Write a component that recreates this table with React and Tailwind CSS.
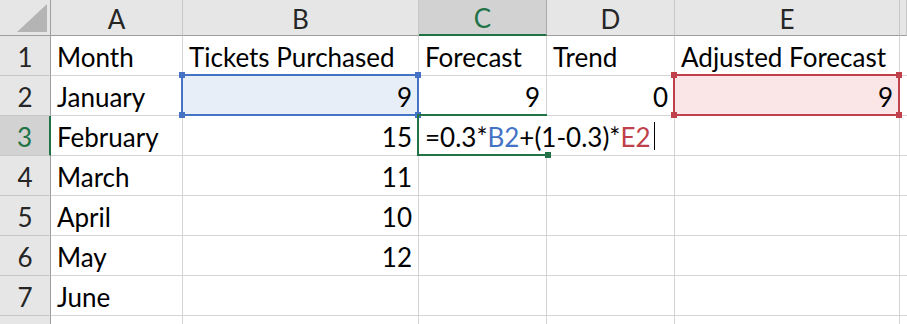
import React from 'react';

const cols = ['A', 'B', 'C', 'D', 'E', ''];

const rows = [
  ['Month', 'Tickets Purchased', 'Forecast', 'Trend', 'Adjusted Forecast'],
  ['January', '9', '9', '0', '9'],
  ['February', '15', '', '', ''],
  ['March', '11', '', '', ''],
  ['April', '10', '', '', ''],
  ['May', '12', '', '', ''],
  ['June', '', '', '', ''],
  ['', '', '', '', ''],
];

const Handle = ({ className, color }) => (
  <span className={`absolute w-[6px] h-[6px] ${color} ${className}`} />
);

const Selection = ({ border, fill, handle }) => (
  <div className={`absolute -left-[2px] -top-[2px] -right-[1px] -bottom-[1px] border-2 ${border} ${fill} z-10 pointer-events-none`}>
    <Handle color={handle} className="-left-[4px] -top-[4px]" />
    <Handle color={handle} className="-right-[4px] -top-[4px]" />
    <Handle color={handle} className="-left-[4px] -bottom-[4px]" />
    <Handle color={handle} className="-right-[4px] -bottom-[4px]" />
  </div>
);

const App = () => {
  return (
    <div
      className="w-[907px] h-[324px] overflow-hidden bg-white text-[26px] text-black leading-none"
      style={{ fontFamily: 'Lato, "Open Sans", sans-serif' }}
    >
      <div className="grid grid-cols-[51px_132px_236px_128px_128px_225px_1fr] grid-rows-[36px_repeat(8,40px)]">
        {/* corner */}
        <div className="bg-[#e6e6e6] border-r border-b border-[#9e9e9e] flex items-end justify-end pr-[3px] pb-[3px]">
          <svg width="30" height="28" viewBox="0 0 30 28">
            <polygon points="30,0 30,28 0,28" fill="#b4b4b4" />
          </svg>
        </div>
        {cols.map((c, i) => (
          <div
            key={c + i}
            className={`flex items-center justify-center pt-[2px] border-b ${
              c === 'C'
                ? 'bg-[#d2d2d2] text-[#217346] border-b-2 border-b-[#217346] border-r border-r-[#ababab]'
                : 'bg-[#e6e6e6] text-[#262626] border-r border-r-[#c8c8c8] border-b-[#9e9e9e]'
            }`}
          >
            {c}
          </div>
        ))}

        {rows.map((r, ri) => {
          const n = ri + 1;
          return (
            <React.Fragment key={n}>
              <div
                className={`flex items-center justify-center pt-[2px] border-b border-b-[#c8c8c8] ${
                  n === 3
                    ? 'bg-[#d2d2d2] text-[#217346] border-r-2 border-r-[#217346]'
                    : 'bg-[#e6e6e6] text-[#262626] border-r border-r-[#9e9e9e]'
                }`}
              >
                {n <= 7 ? n : ''}
              </div>
              {r.map((v, ci) => {
                const numeric = v !== '' && !isNaN(Number(v));
                const isB2 = n === 2 && ci === 1;
                const isE2 = n === 2 && ci === 4;
                const isC3 = n === 3 && ci === 2;
                return (
                  <div
                    key={ci}
                    className={`relative flex items-center pt-[3px] border-r border-b border-[#d4d4d4] whitespace-nowrap ${
                      numeric ? 'justify-end pr-[6px]' : 'justify-start pl-[6px]'
                    } ${isC3 ? 'z-20 overflow-visible border-r-transparent' : ''}`}
                  >
                    {isB2 && <Selection border="border-[#4472c4]" fill="bg-[#e8eef8]" handle="bg-[#4472c4]" />}
                    {isE2 && <Selection border="border-[#c0404b]" fill="bg-[#fbe6e7]" handle="bg-[#c0404b]" />}
                    {isC3 && (
                      <div className="absolute -left-[2px] -top-[2px] -right-[1px] -bottom-[1px] border-2 border-r-0 border-[#217346] pointer-events-none">
                        <span className="absolute -right-[4px] -bottom-[4px] w-[6px] h-[6px] bg-[#217346]" />
                      </div>
                    )}
                    {isC3 ? (
                      <span className="relative z-20 flex items-center bg-white">
                        =0.3*<span className="text-[#4472c4]">B2</span>+(1-0.3)*<span className="text-[#c0404b]">E2</span>
                        <span className="inline-block w-[1px] h-[28px] bg-black ml-[3px] -mt-[3px]" />
                      </span>
                    ) : (
                      <span className="relative z-20">{v}</span>
                    )}
                  </div>
                );
              })}
              <div className="border-b border-[#d4d4d4]" />
            </React.Fragment>
          );
        })}
      </div>
    </div>
  );
};

export default App;
